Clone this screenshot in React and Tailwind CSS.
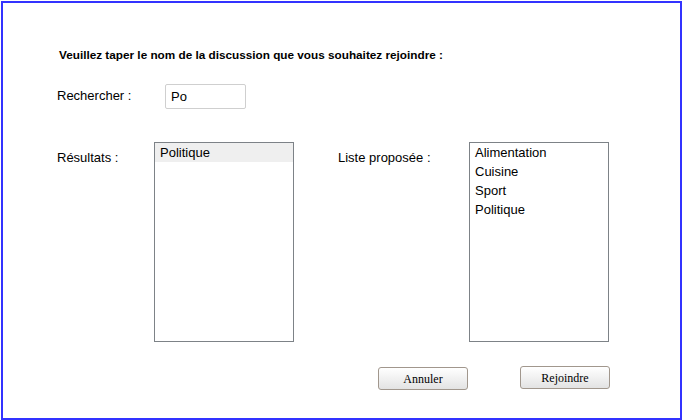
export default function App() {
  const proposed = ["Alimentation", "Cuisine", "Sport", "Politique"];
  return (
    <div className="w-[684px] h-[420px] bg-white pt-[1px] pl-[1px] font-['Liberation_Sans',Arial,sans-serif] text-black">
      <div className="w-[681px] h-[419px] border-2 border-[#3333ff] pl-[54px] pt-[45px] flex flex-col">
        <div className="ml-[2px] text-[11.75px] leading-[14px] font-bold">
          Veuillez taper le nom de la discussion que vous souhaitez rejoindre :
        </div>

        <div className="mt-[22px] flex items-start">
          <div className="w-[108px] pt-[4px] text-[13px] leading-[15px]">Rechercher :</div>
          <div className="w-[81px] h-[25px] border border-[#cfcfcf] rounded-[2px] pl-[5px] text-[13px] leading-[23px]">
            Po
          </div>
        </div>

        <div className="mt-[33px] flex items-start">
          <div className="w-[97px] pt-[8px] text-[13px] leading-[15px]">Résultats :</div>
          <div className="w-[140px] h-[200px] border border-[#7d8287] bg-white">
            <div className="bg-[#efefef] pl-[5px] text-[13px] leading-[19px]">Politique</div>
          </div>
          <div className="ml-[44px] w-[131px] pt-[8px] text-[13px] leading-[15px]">Liste proposée :</div>
          <div className="w-[140px] h-[200px] border border-[#7d8287] bg-white">
            {proposed.map((p) => (
              <div key={p} className="pl-[5px] text-[13px] leading-[19px]">
                {p}
              </div>
            ))}
          </div>
        </div>

        <div className="mt-[24px] ml-[321px] flex items-start gap-[52px]">
          <button className="mt-[1px] w-[90px] h-[23px] border border-[#a1978d] rounded-[3px] bg-gradient-to-b from-white to-[#e3e3e3] font-['Liberation_Serif','Times_New_Roman',serif] text-[12px] leading-[20px] text-black">
            Annuler
          </button>
          <button className="w-[90px] h-[23px] border border-[#a1978d] rounded-[3px] bg-gradient-to-b from-white to-[#e3e3e3] font-['Liberation_Serif','Times_New_Roman',serif] text-[12px] leading-[20px] text-black">
            Rejoindre
          </button>
        </div>
      </div>
    </div>
  );
}
